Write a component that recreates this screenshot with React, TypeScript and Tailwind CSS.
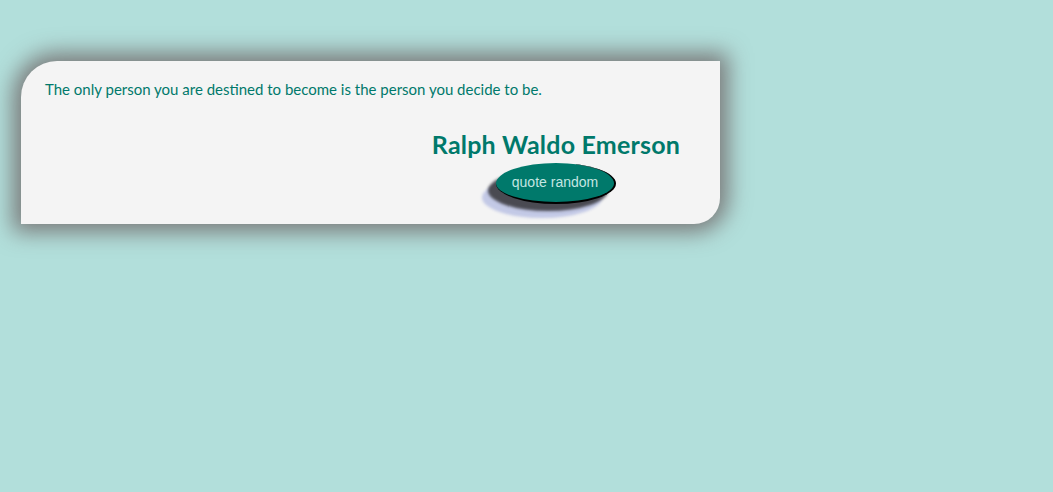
export default function App() {
  return (
    <div className="w-[1053px] h-[492px] bg-[#b2dfdb] pt-[61px] pl-[21px]">
      <div className="w-[699px] h-[163px] bg-[#f4f4f4] rounded-tl-[36px] rounded-br-[26px] shadow-[0_0_22px_8px_#7a7a7a] pt-[18px] px-6 flex flex-col">
        <p className="text-[15px] leading-5 text-[#00796b] font-['Lato','Open_Sans',sans-serif]">
          The only person you are destined to become is the person you decide to be.
        </p>
        <h2 className="mt-[31px] self-end pr-4 text-[25px] leading-7 tracking-[0.2px] font-bold text-[#00796b] font-['Lato','Open_Sans',sans-serif]">
          Ralph Waldo Emerson
        </h2>
        <div className="mt-[5px] flex justify-end pr-[80px]">
          <button className="w-[120px] h-[41px] rounded-[50%] bg-[#00796b] border-r-2 border-b-2 border-black text-[14px] text-[#c4e6e2] font-['Liberation_Sans','Roboto',sans-serif] shadow-[-8px_7px_3px_#4a4a52,-14px_14px_3px_#c3c9e6]">
            quote random
          </button>
        </div>
      </div>
    </div>
  );
}
